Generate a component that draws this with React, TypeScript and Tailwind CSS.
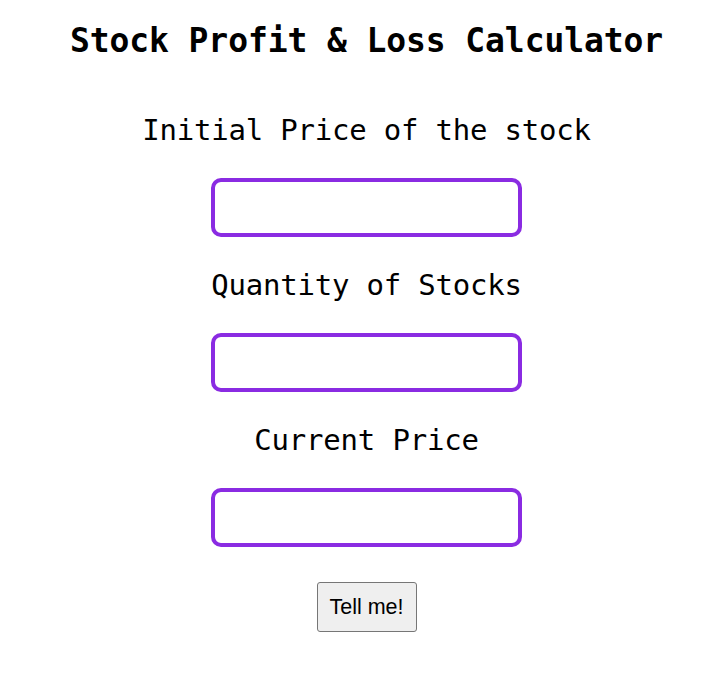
import { useState } from "react";

const fields = ["Initial Price of the stock", "Quantity of Stocks", "Current Price"];

const App = () => {
    const [values, setValues] = useState<string[]>(["", "", ""]);

    return (
        <div className="flex flex-col items-center bg-white min-h-[676px] pl-[24px] font-['DejaVu_Sans_Mono',monospace] text-black">
            <h1 className="mt-[21px] text-[33px] leading-[40px] font-bold tracking-[-0.1px]">
                Stock Profit &amp; Loss Calculator
            </h1>
            <div className="flex flex-col items-center mt-[49px]">
                {fields.map((label, index) => (
                    <div key={label} className="flex flex-col items-center">
                        <label className={`text-[29px] leading-[40px] tracking-[-0.2px] ${index > 0 ? "mt-[28px]" : ""}`}>
                            {label}
                        </label>
                        <input
                            type="number"
                            value={values[index]}
                            onChange={(e) => {
                                const next = [...values];
                                next[index] = e.target.value;
                                setValues(next);
                            }}
                            className="mt-[28px] w-[311px] h-[59px] border-4 border-[#8a2be2] rounded-[10px] outline-none px-2 text-lg"
                        />
                    </div>
                ))}
            </div>
            <button className="mt-[35px] w-[100px] h-[50px] bg-[#efefef] border border-[#767676] rounded-[3px] text-[21.5px] font-['Liberation_Sans',Arial,sans-serif]">
                Tell me!
            </button>
        </div>
    );
};

export default App;
